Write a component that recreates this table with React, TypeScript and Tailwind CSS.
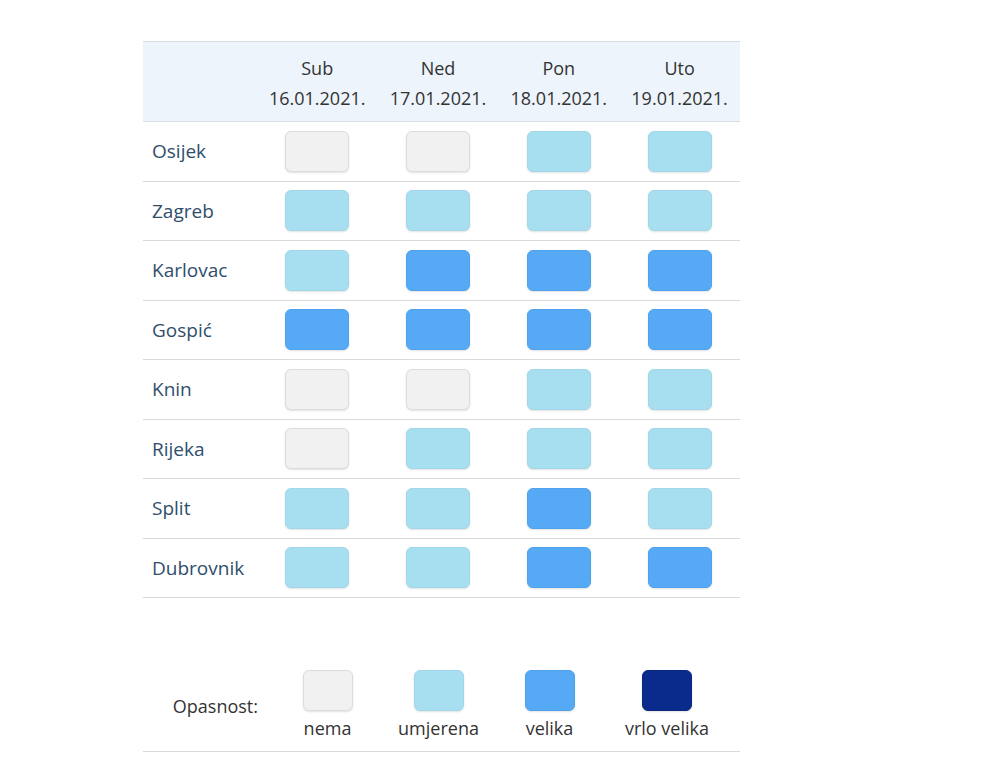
const days = [
  { name: "Sub", date: "16.01.2021." },
  { name: "Ned", date: "17.01.2021." },
  { name: "Pon", date: "18.01.2021." },
  { name: "Uto", date: "19.01.2021." },
];

// 0 = nema, 1 = umjerena, 2 = velika, 3 = vrlo velika
const rows: { city: string; levels: number[] }[] = [
  { city: "Osijek", levels: [0, 0, 1, 1] },
  { city: "Zagreb", levels: [1, 1, 1, 1] },
  { city: "Karlovac", levels: [1, 2, 2, 2] },
  { city: "Gospić", levels: [2, 2, 2, 2] },
  { city: "Knin", levels: [0, 0, 1, 1] },
  { city: "Rijeka", levels: [0, 1, 1, 1] },
  { city: "Split", levels: [1, 1, 2, 1] },
  { city: "Dubrovnik", levels: [1, 1, 2, 2] },
];

const levelClass = [
  "bg-[#f1f1f1] border border-[#dcdcdc]",
  "bg-[#a7dff1] border border-[#a0d8ea]",
  "bg-[#55a9f5] border border-[#4fa2ee]",
  "bg-[#0b2b8c] border border-[#0a2780]",
];

const legend = ["nema", "umjerena", "velika", "vrlo velika"];

const Box = ({ level, legendSize }: { level: number; legendSize?: boolean }) => (
  <div
    className={`${legendSize ? "w-[50px] h-[41px]" : "w-[64px] h-[41px]"} rounded-[6px] shadow-[0_1px_2px_rgba(0,0,0,0.12)] ${levelClass[level]}`}
  />
);

export default function App() {
  return (
    <div
      className="w-[1000px] h-[780px] bg-white pt-[41px] pl-[143px]"
      style={{ fontFamily: '"Open Sans", "Noto Sans", sans-serif' }}
    >
      <div className="w-[597px]">
        <div className="flex h-[81px] bg-[#edf4fb] border-t border-b border-[#d9dde1] text-[18px] text-[#333]">
          <div className="w-[114px]" />
          {days.map((d) => (
            <div key={d.date} className="w-[121px] flex flex-col items-center pt-[11px] leading-[30px]">
              <span>{d.name}</span>
              <span>{d.date}</span>
            </div>
          ))}
        </div>
        {rows.map((r) => (
          <div key={r.city} className="flex items-center h-[59.5px] border-b border-[#d9d9d9]">
            <div className="w-[114px] pl-[9px] text-[19px] text-[#2f4e6b]">{r.city}</div>
            {r.levels.map((l, i) => (
              <div key={i} className="w-[121px] flex justify-center">
                <Box level={l} />
              </div>
            ))}
          </div>
        ))}
        <div className="flex items-start pt-[72px] pb-[11px] border-b border-[#d9d9d9] text-[18px] text-[#333]">
          <div className="w-[129px] pt-[23px] text-right pr-[14px]">Opasnost:</div>
          {legend.map((name, i) => (
            <div
              key={name}
              className={`${i === 3 ? "w-[124px]" : "w-[111px]"} flex flex-col items-center`}
            >
              <Box level={i} legendSize />
              <span className="leading-[24px] mt-[5px]">{name}</span>
            </div>
          ))}
        </div>
      </div>
    </div>
  );
}
